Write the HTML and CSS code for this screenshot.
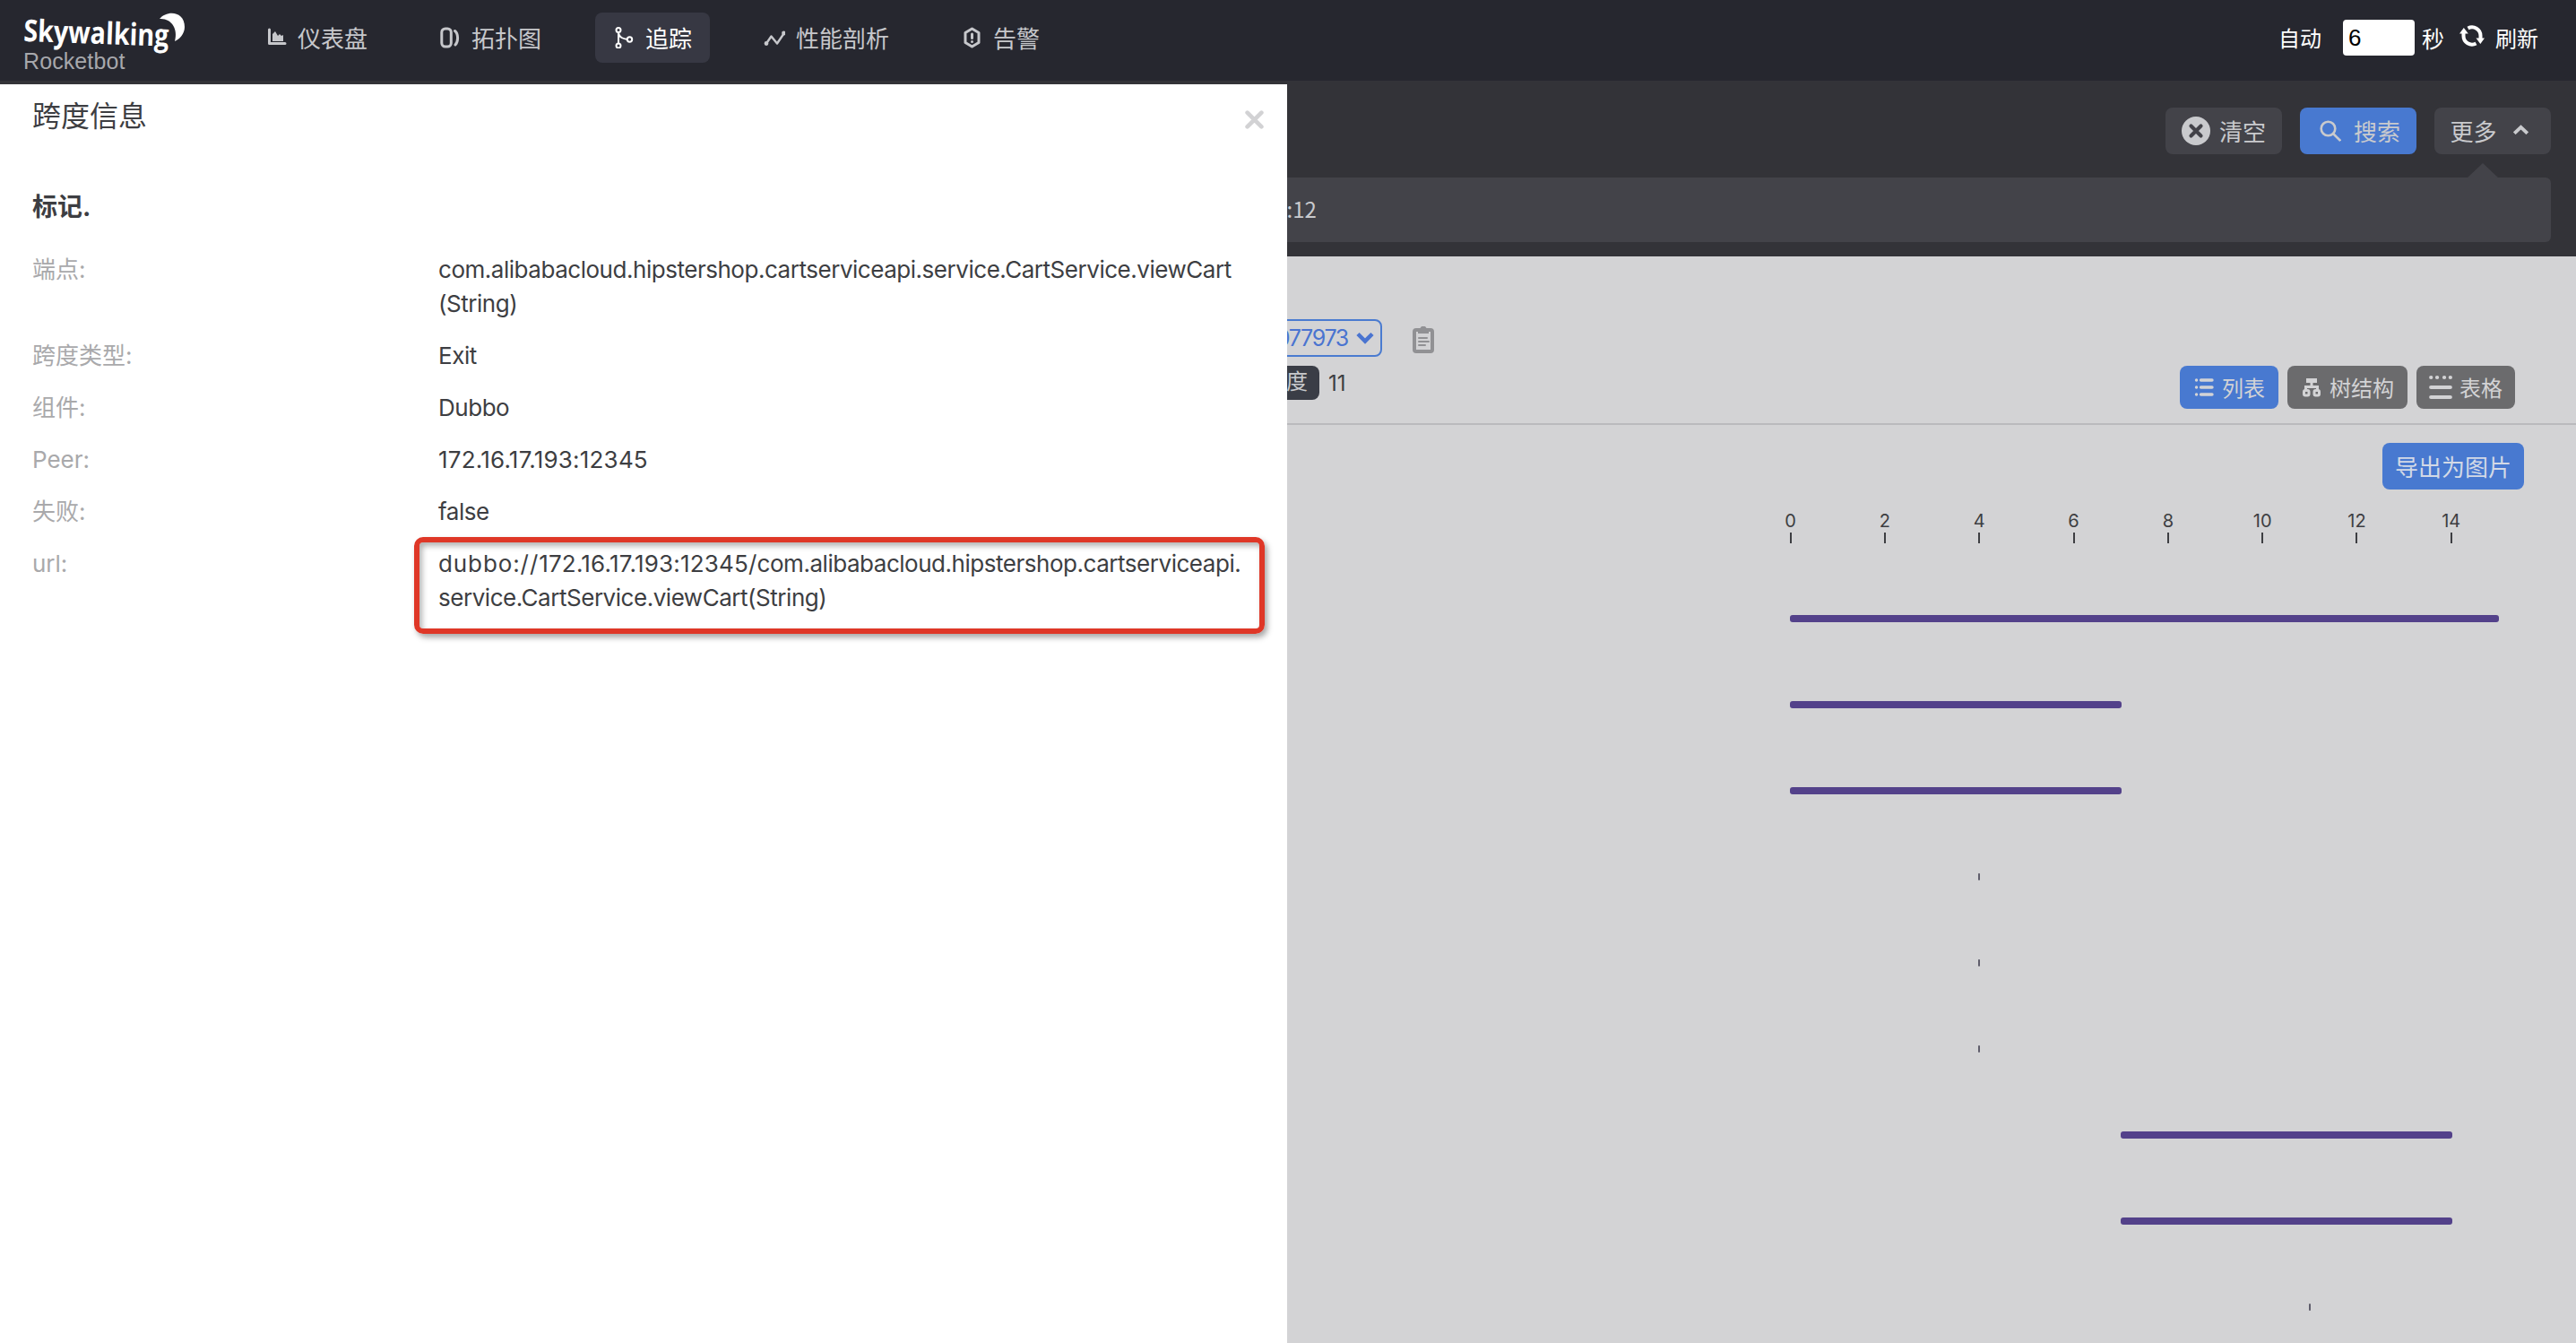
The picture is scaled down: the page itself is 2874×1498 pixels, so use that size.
FILE: index.html
```html
<!DOCTYPE html>
<html lang="zh-CN">
<head>
  <meta charset="UTF-8">
  <title>SkyWalking Rocketbot</title>
  <link rel="stylesheet" href="styles.css">
</head>
<body>
  <header class="header">
    <div class="logo">
      <svg class="logo-mark" width="200" height="60" viewBox="0 0 200 60">
        <text class="logo-text" x="0" y="46" textLength="162" lengthAdjust="spacingAndGlyphs" transform="rotate(2 0 46)">Skywalking</text>
        <path fill="#fff" d="M152 21C160 11 180 12 180 30C180 38 174 44 169 46C173 32 165 20 152 21Z"/>
      </svg>
      <span class="logo-sub">Rocketbot</span>
    </div>

    <nav class="nav">
      <a class="nav-item">
        <svg class="icon" viewBox="0 0 24 24"><path d="M4.500 3v15.500H22" fill="none" stroke="currentColor" stroke-width="3" stroke-linecap="round" stroke-linejoin="round"/><path d="M8 16V8l3-3 3 5 2-2 2 2 2-1v7z" fill="currentColor"/></svg>
        <span>仪表盘</span>
      </a>
      <a class="nav-item">
        <svg class="icon" viewBox="0 0 24 24" fill="none" stroke="currentColor" stroke-width="3" stroke-linecap="round"><rect x="2.800" y="2" width="10.500" height="20" rx="4"/><path d="M17.500 4.500c4 3 4 12 .5 15.500"/></svg>
        <span>拓扑图</span>
      </a>
      <a class="nav-item active">
        <svg class="icon" viewBox="0 0 24 24" fill="none" stroke="currentColor" stroke-width="2"><circle cx="6" cy="3.500" r="2.500"/><circle cx="6" cy="21" r="2.500"/><circle cx="18.500" cy="14" r="2.700"/><path d="M6 6v12.500M6 7c1 5 5 6 10 7"/></svg>
        <span>追踪</span>
      </a>
      <a class="nav-item">
        <svg class="icon" viewBox="0 0 24 24" fill="none" stroke="currentColor" stroke-width="2.400" stroke-linecap="round" stroke-linejoin="round"><path d="M3 18.500l5.500-8 6.500 8 7.500-11"/><circle cx="3" cy="18.500" r="1.200"/><circle cx="22.500" cy="7" r="1.200"/></svg>
        <span>性能剖析</span>
      </a>
      <a class="nav-item">
        <svg class="icon" viewBox="0 0 24 24" fill="none" stroke="currentColor" stroke-width="3" stroke-linejoin="round" stroke-linecap="round"><path d="M12.500 2l7.500 4.500v11L12.500 22 5 17.500v-11z"/><path d="M12.500 8v4.500M12.500 16.500v.1"/></svg>
        <span>告警</span>
      </a>
    </nav>

    <div class="reload">
      <span>自动</span>
      <input class="reload-input" type="text" value="6">
      <span class="reload-unit">秒</span>
      <svg class="reload-icon" viewBox="0 0 28 28" fill="none" stroke="#fff" stroke-width="4"><path d="M4.500 11v3a9.500 9.500 0 0 0 14 8.500M9.500 5.500a9.500 9.500 0 0 1 14 8.500v3"/><path d="M0 11.500L4.800 5l5 6.500zM18.500 16.500h9.500L23.300 23z" fill="#fff" stroke="none"/></svg>
      <span>刷新</span>
    </div>
  </header>

  <section class="search">
    <div class="search-row">
      <button class="btn">
        <svg class="clear-icon" viewBox="0 0 32 32"><circle cx="16" cy="16" r="16" fill="currentColor"/><path d="M10.500 10.500l11 11M21.500 10.500l-11 11" stroke="#434349" stroke-width="4.200" stroke-linecap="round"/></svg>
        <span>清空</span>
      </button>
      <button class="btn btn-blue btn-search">
        <svg class="icon" viewBox="0 0 24 24" fill="none" stroke="currentColor" stroke-width="2.600"><circle cx="9.500" cy="9.500" r="7.800"/><path d="M15 15l8.200 8"/></svg>
        <span>搜索</span>
      </button>
      <button class="btn btn-more">
        <span>更多</span>
        <svg class="more-icon" viewBox="0 0 16 10" fill="none" stroke="currentColor" stroke-width="3.600"><path d="M1.200 9L8 2.500 14.800 9"/></svg>
      </button>
    </div>
    <div class="more-box">
      <span class="more-arrow"></span>
      <span class="more-time">2020-07-14 16:57:12</span>
    </div>
  </section>

  <main class="trace">
    <div class="trace-head">
      <div class="trace-info">
        <div class="trace-id-row">
          <div class="trace-id">
            <span>077973</span>
            <svg class="select-icon" viewBox="0 0 20 14" fill="none" stroke="currentColor" stroke-width="4.500"><path d="M2 2.500l8 8 8-8"/></svg>
          </div>
          <svg class="clip-icon" viewBox="0 0 24 30"><path d="M4 2h4.500a3.800 3.800 0 0 1 7 0H20a4 4 0 0 1 4 4v20a4 4 0 0 1-4 4H4a4 4 0 0 1-4-4V6a4 4 0 0 1 4-4zM4 6v20h16V6h-2v2H6V6z" fill="#919194" fill-rule="evenodd"/><path d="M7 13h9M7 17h11M7 21h7" stroke="#919194" stroke-width="2" stroke-linecap="round"/></svg>
        </div>
        <div class="trace-meta">
          <span class="tag">跨度</span>
          <span>11</span>
        </div>
      </div>
      <div class="views">
        <button class="view view-active">
          <svg class="icon" viewBox="0 0 24 24" stroke="currentColor" stroke-width="3.400" stroke-linecap="round"><path d="M8.500 4H21M8.500 12H21M8.500 20H21M3.500 4h.1M3.500 12h.1M3.500 20h.1"/></svg>
          <span>列表</span>
        </button>
        <button class="view">
          <svg class="icon" viewBox="0 0 24 24" fill="none" stroke="currentColor" stroke-width="3"><path d="M6 4.500h12" stroke-width="5"/><path d="M12 6v5M5.500 16v-4.500h13V16"/><rect x="3.500" y="15.500" width="5.500" height="5.500" rx="1.500"/><rect x="15" y="15.500" width="5.500" height="5.500" rx="1.500"/></svg>
          <span>树结构</span>
        </button>
        <button class="view view-table">
          <svg class="table-icon" viewBox="0 0 26 28" stroke="currentColor" stroke-width="4.200" stroke-linecap="round"><path d="M2.200 3h.1M9 3h.1M17 3h.1M23.800 3h.1M2.200 14h21.600M2.200 25h21.600"/></svg>
          <span>表格</span>
        </button>
      </div>
    </div>

    <div class="export-row">
      <button class="btn btn-blue btn-export"><span>导出为图片</span></button>
    </div>

    <div class="chart">
      <div class="axis">
        <span>0</span>
        <span>2</span>
        <span>4</span>
        <span>6</span>
        <span>8</span>
        <span>10</span>
        <span>12</span>
        <span>14</span>
      </div>
      <div class="spans">
        <div class="span-row"><div class="bar" style="margin-left: 0; width: 100%"></div></div>
        <div class="span-row"><div class="bar" style="margin-left: 0; width: 46.800%"></div></div>
        <div class="span-row"><div class="bar" style="margin-left: 0; width: 46.800%"></div></div>
        <div class="span-row"><div class="bar bar-zero" style="margin-left: 26.600%"></div></div>
        <div class="span-row"><div class="bar bar-zero" style="margin-left: 26.600%"></div></div>
        <div class="span-row"><div class="bar bar-zero" style="margin-left: 26.600%"></div></div>
        <div class="span-row"><div class="bar" style="margin-left: 46.600%; width: 46.800%"></div></div>
        <div class="span-row"><div class="bar" style="margin-left: 46.600%; width: 46.800%"></div></div>
        <div class="span-row"><div class="bar bar-zero" style="margin-left: 73.200%"></div></div>
      </div>
    </div>
  </main>

  <!-- Span detail drawer -->
  <aside class="drawer">
    <div class="drawer-head">
      <h2>跨度信息</h2>
      <svg class="close" viewBox="0 0 20 20" stroke="#d2d2d4" stroke-width="4.400" stroke-linecap="round"><path d="M2.500 2.500l15 15M17.500 2.500l-15 15"/></svg>
    </div>
    <h3>标记.</h3>
    <dl class="tags">
      <dt>端点:</dt>
      <dd>com.alibabacloud.hipstershop.cartserviceapi.service.CartService.viewCart<br>(String)</dd>
      <dt>跨度类型:</dt>
      <dd>Exit</dd>
      <dt>组件:</dt>
      <dd>Dubbo</dd>
      <dt>Peer:</dt>
      <dd><span class="addr">172.16.17.193:12345</span></dd>
      <dt>失败:</dt>
      <dd>false</dd>
      <dt>url:</dt>
      <dd class="marked"><span class="scheme">dubbo://</span><span class="addr">172.16.17.193:12345/</span>com.alibabacloud.hipstershop.cartserviceapi.<br>service.CartService.viewCart(String)</dd>
    </dl>
  </aside>
</body>
</html>
```
FILE: styles.css
```css
*, *::before, *::after { box-sizing: border-box; }
body {
  position: relative;
  margin: 0;
  height: 1498px;
  overflow: hidden;
  display: flex;
  flex-direction: column;
  background: #d3d3d5;
  color: #3d3e42;
  font-family: Inter, "Noto Sans CJK SC", sans-serif;
  font-size: 26px;
}
button {
  border: none;
  font-family: inherit;
  white-space: nowrap;
}
button span { padding-bottom: 2px; }
.icon { width: 24px; height: 24px; flex: none; }

/* header */
.header {
  display: flex;
  align-items: flex-start;
  height: 90px;
  flex: none;
  padding-right: 42px;
  background: #26272f;
}
.logo { width: 250px; height: 90px; padding-left: 26px; }
.logo-mark { display: block; margin-bottom: -6px; overflow: visible; }
.logo-text {
  font-family: "Open Sans", sans-serif;
  font-size: 34px;
  font-weight: 700;
  fill: #fff;
}
.logo-sub {
  display: block;
  line-height: 28px;
  font-family: "Liberation Sans", sans-serif;
  font-size: 25px;
  letter-spacing: .1px;
  color: #a7a8ac;
}
.nav { display: flex; gap: 40px; margin: 14px 0 0 26px; }
.nav-item {
  display: flex;
  align-items: center;
  gap: 12px;
  height: 56px;
  padding: 0 20px;
  border-radius: 8px;
  color: #c6c7cb;
}
.nav-item span { padding-bottom: 1px; }
.nav-item.active { background: #373843; color: #fff; }
.reload {
  display: flex;
  align-items: center;
  margin-left: auto;
  height: 84px;
  color: #fff;
  font-size: 24px;
}
.reload-input {
  width: 80px;
  height: 40px;
  margin: 0 8px 4px 24px;
  margin-bottom: 0;
  padding: 0 6px;
  border: none;
  border-radius: 4px;
  background: #fff;
  color: #000;
  font-family: "Liberation Sans", sans-serif;
  font-size: 26px;
}
.reload span { padding-bottom: 1px; }
.reload-unit { font-size: 25px; }
.reload-icon { width: 28px; height: 28px; margin: 0 12px 4px 17px; }

/* search bar */
.search {
  flex: none;
  height: 196px;
  padding: 30px 28px 16px;
  background: #333338;
}
.search-row { display: flex; justify-content: flex-end; gap: 20px; }
.btn {
  display: flex;
  align-items: center;
  justify-content: center;
  width: 130px;
  height: 52px;
  padding: 0;
  border-radius: 8px;
  background: #434349;
  color: #c9cacd;
  font-size: 26px;
}
.btn-blue { background: #4879d0; }
.clear-icon { width: 32px; height: 32px; margin-right: 10px; }
.btn-search { padding-left: 4px; }
.btn-search .icon { margin-right: 14px; }
.btn-more { padding-right: 8px; }
.more-icon { width: 17px; height: 11px; margin: 0 0 4px 18px; }
.more-box {
  position: relative;
  display: flex;
  align-items: center;
  height: 72px;
  margin-top: 26px;
  padding: 0 0 4px 1219px;
  border-radius: 6px;
  background: #434349;
  color: #c9cacd;
  font-family: "Noto Sans CJK SC", sans-serif;
  font-size: 24px;
}
.more-arrow {
  position: absolute;
  right: 58px;
  top: -16px;
  border: 18px solid transparent;
  border-top: 0;
  border-bottom: 17px solid #434349;
}

/* trace */
.trace { flex: 1; }
.trace-head {
  display: flex;
  justify-content: space-between;
  height: 188px;
  padding: 70px 68px 0 1400px;
  border-bottom: 2px solid #bababd;
}
.trace-id-row { display: flex; align-items: center; }
.trace-id {
  display: flex;
  align-items: center;
  justify-content: flex-end;
  width: 142px;
  height: 42px;
  padding-right: 7px;
  border: 2px solid #4a7bd0;
  border-radius: 8px;
  color: #4a74d0;
  font-size: 25px;
  letter-spacing: -1.300px;
}
.select-icon { width: 20px; height: 14px; margin-left: 9px; }
.clip-icon { width: 24px; height: 30px; margin: 4px 0 0 34px; }
.trace-meta {
  display: flex;
  align-items: center;
  gap: 10px;
  margin-top: 10px;
  font-size: 24px;
}
.tag {
  width: 72px;
  height: 38px;
  padding-right: 13px;
  border-radius: 8px;
  background: #3a3d46;
  color: #c9cacd;
  font-size: 24px;
  line-height: 35px;
  text-align: right;
  white-space: nowrap;
}
.views { display: flex; gap: 10px; margin-top: 52px; }
.view {
  display: flex;
  align-items: center;
  gap: 8px;
  height: 48px;
  padding: 0 15px;
  border-radius: 8px;
  background: #6b6b6d;
  color: #d3d3d5;
  font-size: 24px;
}
.view-active { background: #4879d0; }
.view-table { padding: 0 14px; }
.table-icon { width: 26px; height: 28px; }
.export-row { display: flex; justify-content: flex-end; padding: 20px 58px 0 0; }
.btn-export { width: 158px; color: #d3d9e6; }

/* span chart */
.chart { margin: 22px 86px 0 1997px; }
.axis { display: flex; margin-left: -52px; }
.axis span {
  display: flex;
  flex-direction: column;
  align-items: center;
  width: 105.300px;
  flex: none;
  font-size: 20px;
  line-height: 26px;
}
.axis span::after {
  content: "";
  width: 2px;
  height: 12px;
  background: #3d3e42;
}
.spans { padding-top: 36px; }
.span-row { display: flex; align-items: center; height: 96px; }
.bar { height: 8px; border-radius: 3px; background: #53418a; }
.bar-zero { width: 2px; border-radius: 1px; background: #5f5d6b; }

/* span detail drawer */
.drawer {
  position: absolute;
  left: 0;
  top: 94px;
  width: 1436px;
  height: 1404px;
  padding: 0 26px 0 36px;
  background: #fff;
}
.drawer-head {
  display: flex;
  align-items: center;
  justify-content: space-between;
  height: 70px;
}
.drawer h2 { margin: 0; padding-bottom: 5px; font-size: 32px; font-weight: 400; }
.close { width: 21px; height: 21px; margin-top: 8px; }
.drawer h3 { margin: 47px 0 31px; font-size: 28px; line-height: 40px; }
.tags {
  display: grid;
  grid-template-columns: 453px 1fr;
  row-gap: 20px;
  margin: 0;
  line-height: 38px;
}
.tags dt { color: #a9a9ab; }
.tags dd { margin: 0; letter-spacing: -.470px; white-space: nowrap; }
.addr { letter-spacing: .2px; }
.scheme { letter-spacing: .9px; }
.marked { position: relative; }
.marked::after {
  content: "";
  position: absolute;
  left: -27px;
  top: -11px;
  width: 949px;
  height: 108px;
  border: 6px solid #df3727;
  border-radius: 10px;
  box-shadow: 3px 4px 6px rgba(0, 0, 0, .35), inset 3px 4px 6px rgba(0, 0, 0, .3);
}
```
